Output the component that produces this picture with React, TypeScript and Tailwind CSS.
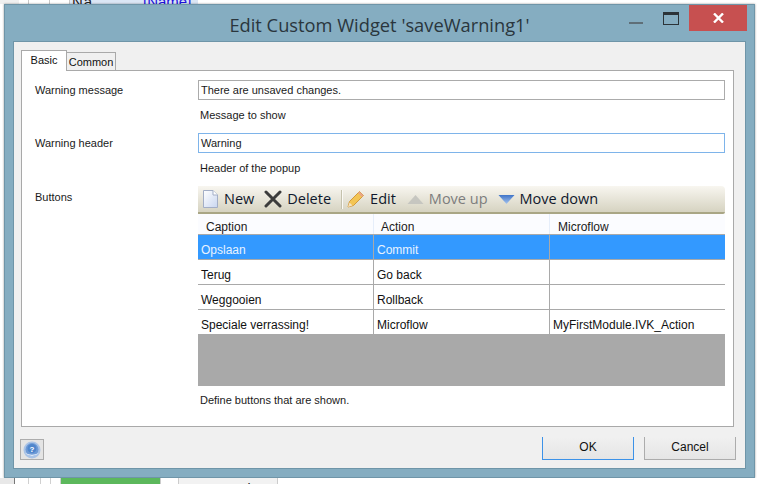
import React from "react";

const sans = "font-['Liberation_Sans',Arial,sans-serif]";
const seg = "font-['Open_Sans',sans-serif]";

function DocIcon() {
  return (
    <svg width="17" height="20" viewBox="0 0 17 20">
      <defs>
        <linearGradient id="d" x1="0" y1="0" x2="1" y2="1">
          <stop offset="0" stopColor="#ffffff" />
          <stop offset="1" stopColor="#c9d6f0" />
        </linearGradient>
      </defs>
      <path d="M1.5 1.5H11L15.5 6V18.5H1.5Z" fill="url(#d)" stroke="#a3aec6" />
      <path d="M11 1.5V6H15.5" fill="#fff" stroke="#a3aec6" />
    </svg>
  );
}

function XIcon() {
  return (
    <svg width="18" height="18" viewBox="0 0 18 18">
      <path d="M2 2L16 16M16 2L2 16" stroke="#3c3c3c" strokeWidth="3" strokeLinecap="round" />
    </svg>
  );
}

function PencilIcon() {
  return (
    <svg width="18" height="18" viewBox="0 0 18 18">
      <path d="M1 17L2.5 11.5L12.5 1.5L16.5 5.5L6.5 15.5Z" fill="#f3c555" stroke="#d29a3c" />
      <path d="M12.5 1.5L16.5 5.5L15 7L11 3Z" fill="#e8a58a" />
      <path d="M1 17L2.5 12.5L5.5 15.5Z" fill="#f5e2c0" />
    </svg>
  );
}

function TriUp() {
  return (
    <svg width="17" height="11" viewBox="0 0 17 11">
      <path d="M8.5 1L16.5 10H0.5Z" fill="#c6c6c0" />
    </svg>
  );
}

function TriDown() {
  return (
    <svg width="17" height="11" viewBox="0 0 17 11">
      <defs>
        <linearGradient id="t" x1="0" y1="0" x2="0" y2="1">
          <stop offset="0" stopColor="#3f74c8" />
          <stop offset="1" stopColor="#a6c4ee" />
        </linearGradient>
      </defs>
      <path d="M0.5 1H16.5L8.5 10Z" fill="url(#t)" />
    </svg>
  );
}

function HelpIcon() {
  return (
    <svg width="18" height="18" viewBox="0 0 18 18">
      <circle cx="9" cy="9" r="8.5" fill="#a9c3e6" />
      <circle cx="9" cy="8.5" r="6.5" fill="#6d9ad6" />
      <circle cx="9" cy="7.5" r="4.5" fill="#4f86cc" />
      <path d="M2 12Q9 18 16 12Q9 15.5 2 12Z" fill="#e9f0fa" />
      <text x="9" y="11" textAnchor="middle" fontSize="8" fontWeight="700" fill="#ffffff" fontFamily="Liberation Sans">?</text>
    </svg>
  );
}

const rows = [
  ["Opslaan", "Commit", ""],
  ["Terug", "Go back", ""],
  ["Weggooien", "Rollback", ""],
  ["Speciale verrassing!", "Microflow", "MyFirstModule.IVK_Action"],
];

function ToolItem({ icon, label, muted }: { icon: React.ReactNode; label: string; muted?: boolean }) {
  return (
    <div className={`flex items-center gap-[5px] ${muted ? "text-[#7d7d7d]" : "text-[#10182c]"}`}>
      {icon}
      <span>{label}</span>
    </div>
  );
}

export default function App() {
  return (
    <div className={`${sans} flex h-[484px] w-[759px] flex-col overflow-hidden bg-white text-[11px] leading-none text-[#111]`}>
      {/* Background page, top sliver */}
      <div className="flex h-[4px] overflow-hidden bg-white">
        <div className="w-[19px] bg-[#f0f0f0]" />
        <div className="w-[10px] border-r border-[#c8c8c8]" />
        <div className="w-[21px] border-r border-[#c8c8c8]" />
        <div className="w-[20px] border-r border-[#c8c8c8]" />
        <div className="flex w-[128px] items-end bg-[#dbe6f5] pl-[2px] text-[15px] leading-none">
          <span className="-mb-[5px] w-[71px] tracking-[1px] text-[#222]">Na...</span>
          <span className="-mb-[5px] text-[#1d10e0]">[Name]</span>
        </div>
      </div>

      {/* Dialog */}
      <div className="ml-[4px] flex h-[474px] w-[751px] flex-col border border-[#6f95a8] bg-[#85adc1] pb-[8px] pl-[8px] pr-[8px] shadow-[0_0_2px_rgba(0,0,0,0.4)]">
        <div className="grid h-[36px] grid-cols-[1fr_auto_1fr] items-start">
          <div />
          <div className={`${seg} pt-[9px] text-[18.3px] leading-[22px] text-[#2a363d]`}>Edit Custom Widget 'saveWarning1'</div>
          <div className="flex justify-end">
            <div className="mr-[20px] mt-[17px] h-[2px] w-[14px] bg-[#5f6f78]" />
            <div className="mr-[10px] mt-[7px] h-[13px] w-[16px] border border-[#2b3338] border-t-[3px]" />
            <div className="-mr-px flex h-[26px] w-[58px] items-center justify-center bg-[#c75050]">
              <svg width="11" height="10" viewBox="0 0 11 10">
                <path d="M1 0.5L10 9.5M10 0.5L1 9.5" stroke="#fff" strokeWidth="2.4" />
              </svg>
            </div>
          </div>
        </div>

        <div className="flex flex-1 flex-col border border-[#6f95a8] bg-[#f0f0f0] pl-[7px] pr-[11px]">
          {/* Tabs */}
          <div className="relative z-10 flex h-[28px] items-end">
            <div className="-mb-px flex h-[21px] w-[46px] justify-center border border-b-0 border-[#a9a9a9] bg-white pt-[4px]">Basic</div>
            <div className="flex h-[18px] w-[49px] items-center justify-center border border-b-0 border-l-0 border-[#a9a9a9] bg-[#f0f0f0] pt-[1px]">Common</div>
          </div>

          {/* Panel */}
          <div className="h-[357px] border border-[#a9a9a9] bg-white pl-[13px] pt-[9px] text-[#1a1a1a]">
            <div className="flex">
              <div className="w-[163px] pt-[5px]">Warning message</div>
              <div className="w-[527px]">
                <div className="flex h-[20px] items-center border border-[#ababab] pl-[2px]">There are unsaved changes.</div>
                <div className="pl-[2px] pt-[10px]">Message to show</div>
              </div>
            </div>
            <div className="mt-[12px] flex">
              <div className="w-[163px] pt-[5px]">Warning header</div>
              <div className="w-[527px]">
                <div className="flex h-[20px] items-center border border-[#7eb4ea] pl-[2px]">Warning</div>
                <div className="pl-[2px] pt-[10px]">Header of the popup</div>
              </div>
            </div>
            <div className="mt-[12px] flex">
              <div className="w-[163px] pt-[6px]">Buttons</div>
              <div className="w-[527px]">
                <div className={`${seg} flex h-[28px] items-center rounded-tr-[4px] rounded-br-[2px] border-b-2 border-[#a9a685] bg-gradient-to-b from-[#f8f6f0] to-[#d6d3c1] pl-[4px] text-[14.5px]`}>
                  <ToolItem icon={<DocIcon />} label="New" />
                  <div className="ml-[10px]"><ToolItem icon={<XIcon />} label="Delete" /></div>
                  <div className="ml-[10px] mr-[4px] h-[19px] w-[2px] border-r border-[#fbfaf6] bg-[#c5c2ad]" />
                  <ToolItem icon={<PencilIcon />} label="Edit" />
                  <div className="ml-[11px]"><ToolItem icon={<TriUp />} label="Move up" muted /></div>
                  <div className="ml-[10px]"><ToolItem icon={<TriDown />} label="Move down" /></div>
                </div>
                <div className="h-[172px] bg-[#a9a9a9] text-[12px]">
                  <div className="grid h-[21px] grid-cols-[176px_176px_175px] border-b border-[#a9a9a9] bg-[#fbfcff]">
                    {["Caption", "Action", "Microflow"].map((h, i) => (
                      <div key={h} className={`flex items-center pt-[6px] ${i === 0 ? "pl-[8px]" : i === 1 ? "pl-[7px]" : "pl-[8px]"} ${i < 2 ? "border-r border-[#e6eefa]" : ""}`}>{h}</div>
                    ))}
                  </div>
                  {rows.map((r, i) => (
                    <div key={r[0]} className={`grid h-[25px] grid-cols-[176px_176px_175px] border-b border-[#a9a9a9] ${i === 0 ? "bg-[#3399ff] text-[#e8f3ff]" : "bg-white text-[#111]"}`}>
                      {r.map((c, j) => (
                        <div key={j} className={`flex items-center pl-[3px] pt-[6px] ${j < 2 ? "border-r border-[#a9a9a9]" : ""}`}>{c}</div>
                      ))}
                    </div>
                  ))}
                </div>
                <div className="pl-[2px] pt-[9px]">Define buttons that are shown.</div>
              </div>
            </div>
          </div>

          {/* Footer */}
          <div className="flex items-start pt-[10px] text-[12px]">
            <div className="-ml-px mt-[2px] flex h-[21px] w-[24px] items-center justify-center border border-[#acacac] bg-[#e4e4e4]">
              <HelpIcon />
            </div>
            <div className="ml-auto mr-[-2px] flex gap-[10px]">
              <div className="flex h-[23px] w-[92px] items-center justify-center border-x border-b border-[#3c92e8] bg-gradient-to-b from-[#f0f0f0] to-[#e5e5e5] pb-[2px]">OK</div>
              <div className="flex h-[23px] w-[92px] items-center justify-center border-x border-b border-[#acacac] bg-gradient-to-b from-[#f0f0f0] to-[#e5e5e5] pb-[2px]">Cancel</div>
            </div>
          </div>
        </div>
      </div>

      {/* Background page, bottom sliver */}
      <div className="flex h-[6px] overflow-hidden bg-white text-[14px]">
        <div className="w-[15px] border-r border-[#777] bg-[#e8e8e8]" />
        <div className="w-[14px] border-r border-[#d0d0d0]" />
        <div className="w-[12px] border-r border-[#d0d0d0]" />
        <div className="w-[10px] border-r border-[#d0d0d0]" />
        <div className="w-[10px] border-r border-[#d0d0d0]" />
        <div className="h-full w-[99px] bg-[#5cb85c] pl-[32px] pt-[4px] text-white">Save</div>
        <div className="w-[18px] border-l border-[#ccc]" />
        <div className="h-full w-[100px] border-x border-[#ccc] bg-[#f2f2f2] pl-[28px] pt-[4px] text-[#222]">Cancel</div>
      </div>
    </div>
  );
}
